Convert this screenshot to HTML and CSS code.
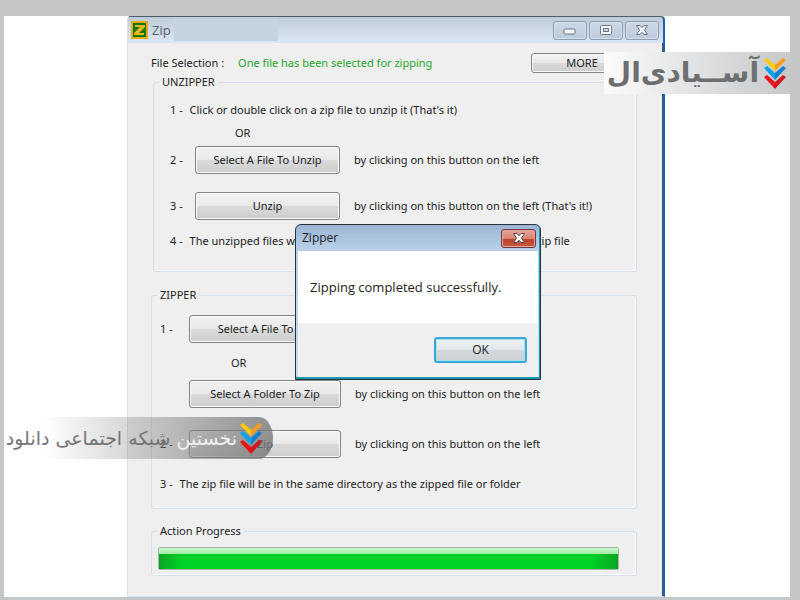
FILE: index.html
```
<!DOCTYPE html>
<html lang="en">
<head>
    <meta charset="UTF-8">
    <meta name="viewport" content="width=device-width, initial-scale=1.0">
    <title>Zip</title>
    <link rel="stylesheet" href="styles.css">
</head>
<body>
    <div class="page">
        <main class="window">
            <header class="titlebar">
                <svg class="app-icon" viewBox="0 0 17 18" aria-hidden="true">
                    <rect width="17" height="18" fill="#eda812"/>
                    <rect x="2" y="2" width="13" height="14" fill="#087a10"/>
                    <path d="M4 4h10v2l-6 6h5v2H3v-2l6-6H4z" fill="#f3b51b"/>
                </svg>
                <h1>Zip</h1>
                <span class="title-blank"></span>
                <div class="window-buttons">
                    <button type="button" aria-label="Minimize">
                        <svg viewBox="0 0 14 12"><rect x="1" y="5" width="11" height="5" rx="1" fill="#f7f9fb" stroke="#6c7685"/></svg>
                    </button>
                    <button type="button" aria-label="Maximize">
                        <svg viewBox="0 0 14 12"><rect x="1.500" y="1.500" width="11" height="9" rx="1" fill="#f7f9fb" stroke="#6c7685"/><rect x="4.500" y="4.500" width="5" height="3" fill="#c8d4e2" stroke="#6c7685"/></svg>
                    </button>
                    <button type="button" aria-label="Close">
                        <svg viewBox="0 0 14 12"><path d="M1.500 1.500h3.500l2 2.300 2-2.300h3.500L9.500 6l3 4.500H9L7 8.200 5 10.500H1.500l3-4.500z" fill="#f7f9fb" stroke="#6c7685"/></svg>
                    </button>
                </div>
            </header>

            <div class="content">
                <div class="selection">
                    <span>File Selection :</span>
                    <span class="status">One file has been selected for zipping</span>
                    <button type="button" class="btn more">MORE</button>
                </div>

                <fieldset class="group unzipper">
                    <legend>UNZIPPER</legend>
                    <p class="note">1 - <span>Click or double click on a zip file to unzip it (That's it)</span></p>
                    <p class="or">OR</p>
                    <div class="step">
                        <span>2 -</span>
                        <button type="button" class="btn">Select A File To Unzip</button>
                        <span>by clicking on this button on the left</span>
                    </div>
                    <div class="step">
                        <span>3 -</span>
                        <button type="button" class="btn">Unzip</button>
                        <span>by clicking on this button on the left (That's it!)</span>
                    </div>
                    <p class="note">4 - <span>The unzipped files will be kept in the same directory as the original zip file</span></p>
                </fieldset>

                <fieldset class="group zipper">
                    <legend>ZIPPER</legend>
                    <div class="step">
                        <span>1 -</span>
                        <button type="button" class="btn">Select A File To Zip</button>
                        <span>by clicking on this button on the left</span>
                    </div>
                    <p class="or">OR</p>
                    <div class="step">
                        <span></span>
                        <button type="button" class="btn">Select A Folder To Zip</button>
                        <span>by clicking on this button on the left</span>
                    </div>
                    <div class="step last">
                        <span>2 -</span>
                        <button type="button" class="btn">Zip</button>
                        <span>by clicking on this button on the left</span>
                    </div>
                    <p class="note">3 - <span>The zip file will be in the same directory as the zipped file or folder</span></p>
                </fieldset>

                <fieldset class="group action">
                    <legend>Action Progress</legend>
                    <progress value="100" max="100" aria-label="Action Progress"></progress>
                </fieldset>
            </div>

            <div class="dialog" role="dialog" aria-labelledby="dialog-title">
                <div class="dialog-bar">
                    <h2 id="dialog-title">Zipper</h2>
                    <button type="button" class="dialog-close" aria-label="Close">
                        <svg viewBox="0 0 14 12"><path d="M1.500 1.500h3.500l2 2.300 2-2.300h3.500L9.500 6l3 4.500H9L7 8.200 5 10.500H1.500l3-4.500z" fill="#fff" stroke="#64454b"/></svg>
                    </button>
                </div>
                <p class="message">Zipping completed successfully.</p>
                <div class="dialog-actions">
                    <button type="button" class="ok">OK</button>
                </div>
            </div>
        </main>

        <div class="brand" lang="fa" dir="rtl">
            <svg class="chevrons" viewBox="0 0 24 32" aria-hidden="true">
                <path d="M1 3l3-2 8 7v6z" fill="#ffcb05"/>
                <path d="M23 3l-3-2-8 7v6z" fill="#f99d1c"/>
                <path d="M1 11l3-2 8 7v7z" fill="#0aa2e8"/>
                <path d="M23 11l-3-2-8 7v7z" fill="#1580cf"/>
                <path d="M1 20l3-2 8 7v7z" fill="#ed1119"/>
                <path d="M23 20l-3-2-8 7v7z" fill="#cf1820"/>
            </svg>
            <span>آســیادی‌ال</span>
        </div>

        <div class="ribbon" lang="fa" dir="rtl">
            <svg class="chevrons" viewBox="0 0 24 32" aria-hidden="true">
                <path d="M1 3l3-2 8 7v6z" fill="#ffcb05"/>
                <path d="M23 3l-3-2-8 7v6z" fill="#f99d1c"/>
                <path d="M1 11l3-2 8 7v7z" fill="#0aa2e8"/>
                <path d="M23 11l-3-2-8 7v7z" fill="#1580cf"/>
                <path d="M1 20l3-2 8 7v7z" fill="#ed1119"/>
                <path d="M23 20l-3-2-8 7v7z" fill="#cf1820"/>
            </svg>
            <p><span>نخستین</span> شبکه اجتماعی دانلود</p>
        </div>
    </div>
</body>
</html>
```
FILE: styles.css
```
* {
    box-sizing: border-box;
}

body {
    margin: 0;
    background-color: #c5c6c8;
    color: #222;
    font-family: "Noto Sans", Tahoma, sans-serif;
    font-size: 11px;
    line-height: 16px;
}

h1, h2, p {
    margin: 0;
    font-weight: normal;
}

button {
    font: inherit;
    color: inherit;
    padding: 0;
}

.page {
    position: relative;
    display: grid;
    grid-template-columns: 123fr 538fr 125fr;
    min-height: 100vh;
    border: solid #c5c6c8;
    border-width: 16px 10px 3px 4px;
    background-color: #fff;
}

.window {
    position: relative;
    grid-column: 2;
    background-color: #efefef;
    border: 1px solid #d3e2f0;
    border-top: 1px solid #4d5c69;
    border-right: 2px solid #1565b0;
    box-shadow: inset -1px 0 #45515d;
    border-radius: 4px 4px 0 0;
}

/* Title bar */
.titlebar {
    display: flex;
    align-items: center;
    height: 26px;
    padding: 0 4px 0 3px;
    background: linear-gradient(#becbd9, #dae6f3);
    border-radius: 4px 4px 0 0;
}

.app-icon {
    width: 17px;
    height: 18px;
}

h1 {
    margin-left: 4px;
    color: #59616b;
    font-family: "Open Sans", sans-serif;
    font-size: 13px;
}

.title-blank {
    width: 104px;
    height: 22px;
    margin-left: 3px;
    background-color: #c5d2e0;
}

.window-buttons {
    display: flex;
    gap: 2px;
    margin-left: auto;
}

.window-buttons button {
    display: grid;
    place-items: center;
    width: 34px;
    height: 19px;
    border: 1px solid #8c9bae;
    border-radius: 3px;
    background: linear-gradient(#ccd8e5, #bccbdc);
    box-shadow: inset 0 0 0 1px #d5e0ec;
}

.window-buttons svg,
.dialog-close svg {
    width: 14px;
    height: 12px;
}

/* Main area */
.content {
    padding: 9px 26px 20px 23px;
}

.selection {
    display: flex;
    align-items: center;
    height: 22px;
}

.status {
    margin-left: 14px;
    color: #1fa52c;
}

.btn {
    height: 28px;
    border: 1px solid #858585;
    border-radius: 3px;
    background: linear-gradient(#f2f2f2, #e9e9e9 50%, #dadada 50%, #cecece);
    box-shadow: inset 0 0 0 1px #f8f8f8;
}

.more {
    width: 102px;
    height: 20px;
    margin-right: 4px;
    margin-left: auto;
}

.group {
    min-width: 0;
    margin: 0;
    padding: 0;
    border: 1px solid #d5e0e8;
    border-radius: 3px;
    box-shadow: inset -1px -1px #fafafa;
}

.group legend {
    padding: 0 3px;
}

.step {
    display: grid;
    grid-template-columns: 25px 145px 1fr;
    align-items: center;
    margin-bottom: 18px;
    white-space: nowrap;
}

.step span:last-child {
    padding-left: 14px;
}

.note {
    line-height: 22px;
    white-space: nowrap;
}

.note span {
    margin-left: 4px;
}

.or {
    line-height: 22px;
}

.unzipper {
    margin-left: 2px;
    padding: 9px 0 19px 16px;
}

.unzipper legend {
    margin-left: -11px;
}

.unzipper .or {
    padding: 1px 0 2px 65px;
}

.unzipper .step + .note {
    margin-top: -8px;
}

.zipper {
    margin-top: 15px;
    padding: 12px 0 13px 8px;
}

.zipper legend {
    margin-left: -3px;
}

.zipper .step {
    grid-template-columns: 29px 152px 1fr;
}

.zipper .or {
    margin-top: -10px;
    padding: 1px 0 6px 71px;
}

.zipper .step.last {
    margin: 22px 0 15px;
}

.action {
    margin-top: 14px;
    padding: 8px 17px 5px 6px;
}

.action legend {
    margin-left: -1px;
}

progress {
    display: block;
    appearance: none;
    width: 100%;
    height: 23px;
    border: 1px solid #a9b3a9;
    border-radius: 2px;
}

progress::-webkit-progress-bar {
    background: none;
}

progress::-webkit-progress-value {
    background:
        linear-gradient(#c8f8ca, #9aeaa0 30%, transparent 30%),
        linear-gradient(90deg, #0aa522, #00d328 5%, #00d328 94%, #0aa522);
}

/* Message box over the window */
.dialog {
    position: absolute;
    top: 207px;
    left: 167px;
    width: 246px;
    padding: 0 2px 2px;
    border: 1px solid #26333e;
    border-radius: 6px 6px 0 0;
    background: linear-gradient(#9bb5d3, #b9d1ea 26px, #c5e2f4);
    box-shadow: inset -1px -2px #159aae;
    font-family: "Open Sans", sans-serif;
    font-size: 12px;
}

.dialog-bar {
    display: flex;
    align-items: center;
    justify-content: space-between;
    height: 26px;
    padding: 0 2px 0 4px;
}

h2 {
    font-size: 12px;
}

.dialog-close {
    display: grid;
    place-items: center;
    width: 35px;
    height: 19px;
    border: 1px solid #6c3540;
    border-radius: 3px;
    background: linear-gradient(#e6a49a, #d98376 50%, #bd3d26 50%, #c95a43);
    box-shadow: inset 0 0 0 1px #e3a79c;
}

.message {
    padding: 28px 12px;
    background-color: #fff;
    font-size: 13px;
}

.dialog-actions {
    display: flex;
    justify-content: flex-end;
    padding: 14px 11px;
    background-color: #f0f0f0;
}

.ok {
    width: 93px;
    height: 26px;
    border: 2px solid #3da6d2;
    border-radius: 3px;
    background: linear-gradient(#eef2f3, #e1e6e8 50%, #d3d9dc 50%, #ccd2d4);
    box-shadow: inset 0 0 0 1px #a5e4f8;
}

/* Site marks */
.chevrons {
    flex: none;
    width: 24px;
    height: 32px;
}

.brand {
    position: absolute;
    top: 36px;
    right: 0;
    display: flex;
    align-items: center;
    gap: 4px;
    width: 186px;
    height: 42px;
    padding-right: 3px;
    background: linear-gradient(90deg, #fbfbfb, #c6c8ca);
    color: #6d6e70;
    font-family: "DejaVu Sans", sans-serif;
    font-size: 28px;
    font-weight: bold;
    line-height: 40px;
    white-space: nowrap;
}

.ribbon {
    position: absolute;
    top: 401px;
    left: 0;
    display: flex;
    align-items: center;
    gap: 2px;
    width: 269px;
    height: 42px;
    padding-right: 10px;
    border-radius: 0 14px 14px 0 / 0 21px 21px 0;
    background: linear-gradient(90deg, rgba(140, 140, 140, 0) 15%, rgba(120, 120, 120, 0.8));
    color: #747476;
    font-family: "DejaVu Sans", sans-serif;
    font-size: 19px;
    line-height: 28px;
    white-space: nowrap;
}

.ribbon span {
    color: #f1f1f1;
}
```
